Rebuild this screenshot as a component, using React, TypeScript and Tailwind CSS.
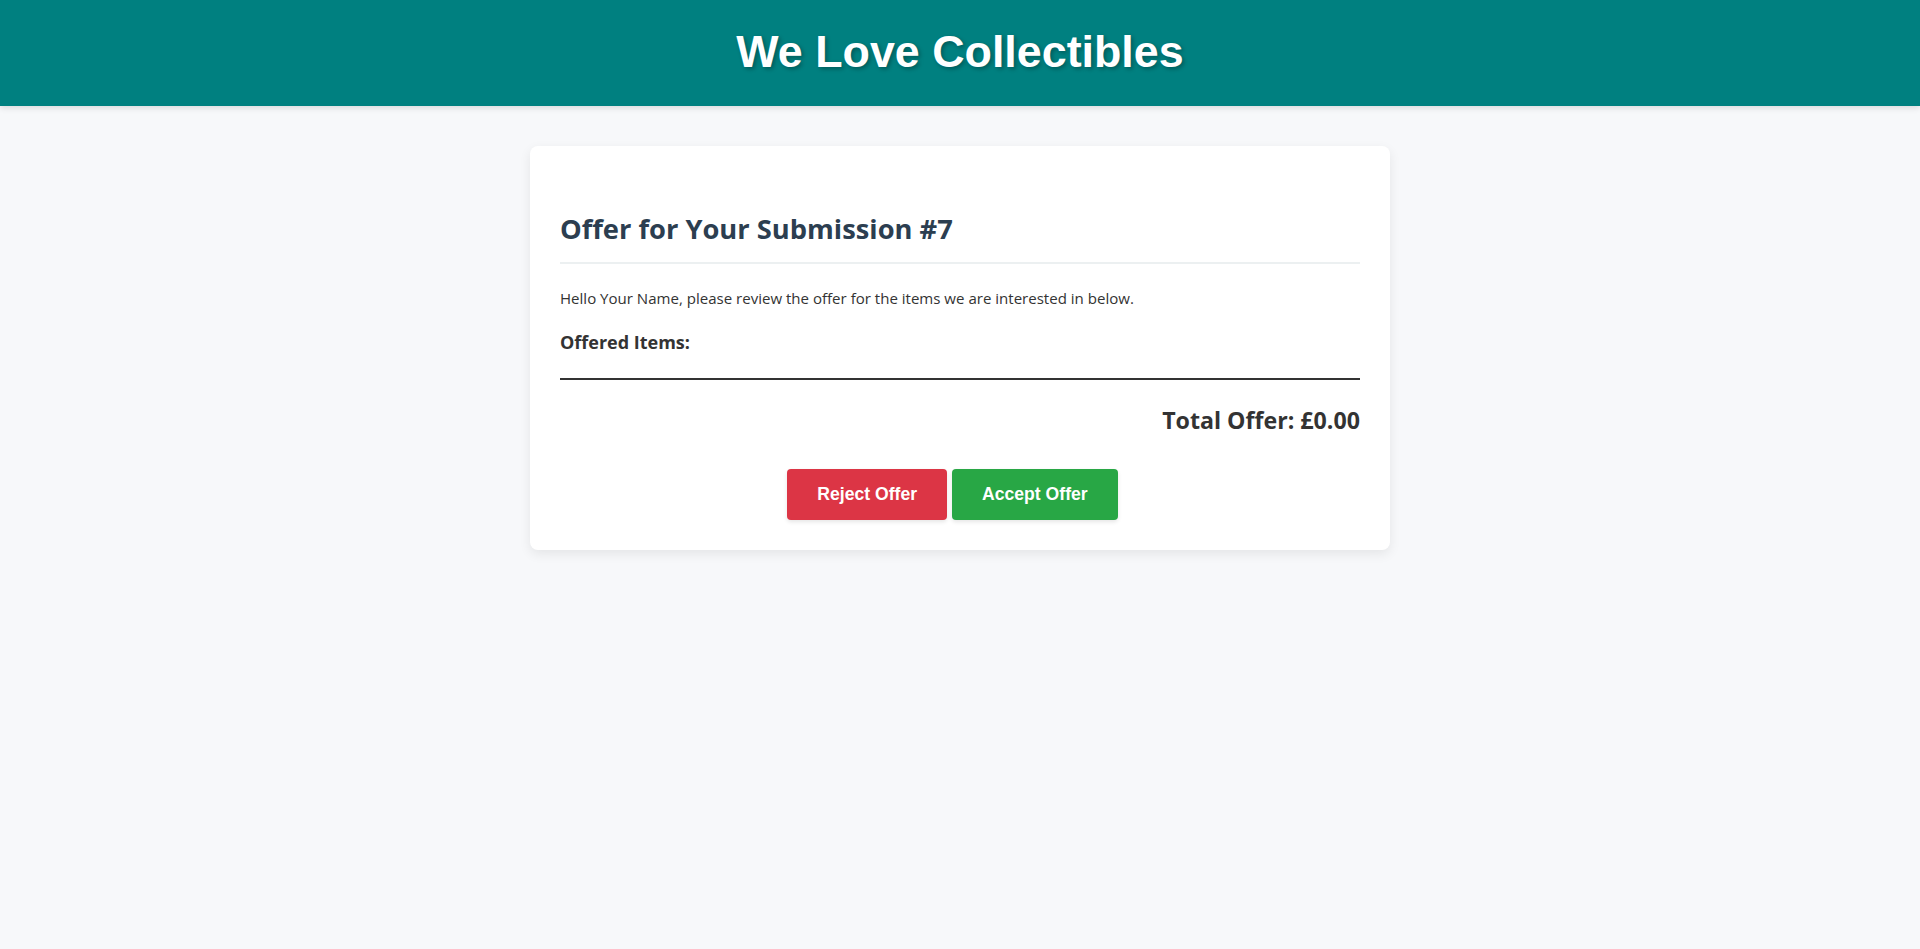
import React from "react";

export default function App() {
  return (
    <div className="min-h-[949px] bg-[#f7f8fa]" style={{ fontFamily: '"Open Sans", "Noto Sans", sans-serif' }}>
      <header className="h-[106px] pb-[4px] bg-[#008080] flex items-center justify-center shadow-[0_2px_6px_rgba(0,0,0,0.12)]">
        <h1
          className="text-white font-bold text-[44.8px] leading-none [text-shadow:2px_2px_4px_rgba(0,0,0,0.3)]"
          style={{ fontFamily: '"Liberation Sans", Arial, sans-serif' }}
        >
          We Love Collectibles
        </h1>
      </header>
      <main className="pt-[40px] flex justify-center">
        <div className="w-[860px] bg-white rounded-[8px] shadow-[0_4px_12px_rgba(0,0,0,0.08)] px-[30px] pt-[30px] pb-[30px]">
          <h2 className="mt-[36px] text-[27.3px] leading-[34px] font-bold text-[#2c3e50] pb-[16px] border-b-2 border-[#ecf0f1]">
            Offer for Your Submission #7
          </h2>
          <p className="mt-[22px] text-[15.05px] leading-[24px] text-[#333]">
            Hello Your Name, please review the offer for the items we are interested in below.
          </p>
          <h3 className="mt-[20px] text-[18px] leading-[24px] font-bold text-[#333]">Offered Items:</h3>
          <div className="mt-[24px] border-t-2 border-[#333]"></div>
          <div className="mt-[25px] text-right text-[23.2px] leading-[30px] font-bold text-[#333]">
            Total Offer: £0.00
          </div>
          <div className="mt-[34px] flex justify-center gap-[5px] pr-[15px]">
            <button
              className="px-[30px] py-[15px] rounded-[4px] bg-[#dc3545] text-white font-bold text-[17.6px] leading-[21px] shadow-[0_2px_4px_rgba(0,0,0,0.1)]"
              style={{ fontFamily: '"Liberation Sans", Arial, sans-serif' }}
            >
              Reject Offer
            </button>
            <button
              className="px-[30px] py-[15px] rounded-[4px] bg-[#28a745] text-white font-bold text-[17.6px] leading-[21px] shadow-[0_2px_4px_rgba(0,0,0,0.1)]"
              style={{ fontFamily: '"Liberation Sans", Arial, sans-serif' }}
            >
              Accept Offer
            </button>
          </div>
        </div>
      </main>
    </div>
  );
}
